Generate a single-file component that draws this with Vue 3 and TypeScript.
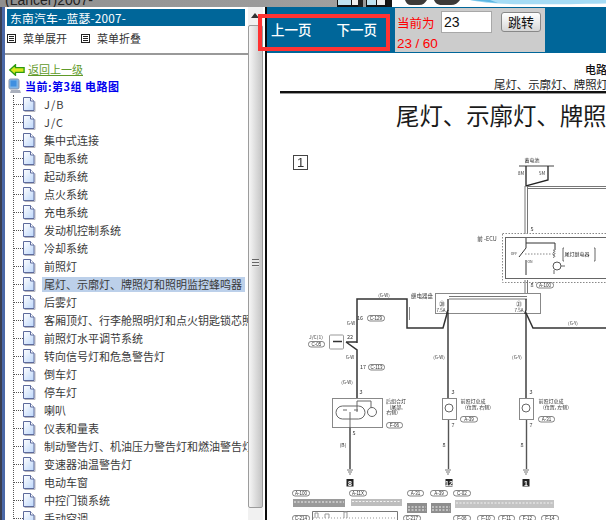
<script setup lang="ts">
const items: string[] = [
  'J/B', 'J/C', '集中式连接', '配电系统', '起动系统', '点火系统', '充电系统', '发动机控制系统', '冷却系统', '前照灯',
  '尾灯、示廓灯、牌照灯和照明监控蜂鸣器', '后雾灯', '客厢顶灯、行李舱照明灯和点火钥匙锁芯照明灯', '前照灯水平调节系统',
  '转向信号灯和危急警告灯', '倒车灯', '停车灯', '喇叭', '仪表和量表', '制动警告灯、机油压力警告灯和燃油警告灯',
  '变速器油温警告灯', '电动车窗', '中控门锁系统', '手动空调'
]
const selected = '尾灯、示廓灯、牌照灯和照明监控蜂鸣器'
const isLatin = (s: string): boolean => /^[A-Z/]+$/.test(s)

interface Pill { x: number; y: number; w: number; t: string }
const pills: Pill[] = [
  { x: 536, y: 285, w: 17, t: 'A-100' }, { x: 367, y: 318, w: 17, t: 'C-129' }, { x: 308, y: 344, w: 16, t: 'C-05' },
  { x: 368, y: 367, w: 16, t: 'C-113' }, { x: 386, y: 425, w: 16, t: 'F-06' }, { x: 460, y: 419, w: 17, t: 'A-39' },
  { x: 538, y: 419, w: 16, t: 'A-31' }, { x: 292, y: 493, w: 17, t: 'A-100' }, { x: 349, y: 493, w: 17, t: 'A-11X' },
  { x: 407, y: 493, w: 16, t: 'A-31' }, { x: 430, y: 493, w: 17, t: 'A-39' }, { x: 453, y: 493, w: 17, t: 'C-02' },
  { x: 292, y: 518, w: 17, t: 'C-214' }, { x: 403, y: 518, w: 17, t: 'C-217' }, { x: 453, y: 518, w: 17, t: 'F-06' },
  { x: 477, y: 518, w: 17, t: 'F-10' }, { x: 498, y: 518, w: 16, t: 'F-11' }, { x: 519, y: 518, w: 16, t: 'F-12' },
  { x: 541, y: 518, w: 17, t: 'F-14' }
]

interface Label { x: number; y: number; t: string; s?: number }
const labels: Label[] = [
  { x: 532, y: 162, t: '蓄电池', s: 5 }, { x: 521, y: 174.5, t: '8M' }, { x: 542, y: 174.5, t: '5M' }, { x: 532, y: 231, t: '5', s: 5.5 },
  { x: 487, y: 241, t: '前 -ECU', s: 5.5 }, { x: 514, y: 255, t: 'OFF', s: 3.5 }, { x: 530, y: 263, t: 'ON', s: 3.5 },
  { x: 532, y: 287, t: '8', s: 5.5 }, { x: 422, y: 298, t: '继电器盘', s: 5.5 }, { x: 384, y: 297, t: '(G-W)' },
  { x: 442, y: 306, t: '⑳', s: 6 }, { x: 441, y: 312, t: '7.5A' }, { x: 519, y: 306, t: '㉑', s: 6 }, { x: 519, y: 312, t: '7.5A' },
  { x: 360, y: 320, t: '16', s: 5.5 }, { x: 351, y: 325, t: 'G-W' }, { x: 573, y: 325, t: '(G-Y)' }, { x: 350, y: 339, t: '22', s: 5.5 },
  { x: 316, y: 339, t: 'J/C(1)', s: 5 }, { x: 350, y: 359, t: 'G-W' }, { x: 363, y: 369, t: '17', s: 5.5 }, { x: 347, y: 384, t: '(G-W)' },
  { x: 439, y: 359, t: '(G-W)' }, { x: 517, y: 359, t: '(G-Y)' }, { x: 361, y: 394, t: '3', s: 5.5 }, { x: 453, y: 394, t: '3', s: 5.5 }, { x: 531, y: 394, t: '3', s: 5.5 },
  { x: 396, y: 403, t: '后组合灯', s: 5 }, { x: 396, y: 408.5, t: '(尾部,', s: 5 }, { x: 392, y: 414, t: '右侧)', s: 5 },
  { x: 473, y: 403, t: '前照灯总成', s: 5 }, { x: 478, y: 408.5, t: '(位置, 右侧)', s: 5 },
  { x: 551, y: 403, t: '前照灯总成', s: 5 }, { x: 556, y: 408.5, t: '(位置, 左侧)', s: 5 },
  { x: 354, y: 435, t: '5', s: 5.5 }, { x: 453, y: 427, t: '7', s: 5.5 }, { x: 531, y: 427, t: '7', s: 5.5 }, { x: 343, y: 447, t: '(B)', s: 5 }, { x: 444, y: 447, t: '8', s: 5.5 }, { x: 522, y: 447, t: '8', s: 5.5 },
  { x: 577, y: 256, t: '尾灯继电器', s: 5 }
]

const grounds: Array<[number, number]> = [[350, 469], [448, 469], [526, 469]]
const badges: Array<[number, string]> = [[350, '8'], [449, '12'], [526, '1']]
const rects: Array<[number, number, number, number, string]> = [
  [293, 499, 52, 8, '#9a9a9a'], [351, 499, 51, 7, '#bdbdbd'], [407, 503, 20, 10, '#8e8e8e'],
  [431, 503, 20, 10, '#8e8e8e'], [455, 500, 99, 8, '#c4c4c4']
]
</script>

<template>
  <div class="page">
    <div class="strip">
      <div class="strip-title">(Lancer)2007-</div>
      <svg class="strip-art" viewBox="337 0 269 7" width="269" height="7" aria-hidden="true">
        <rect x="337" y="0" width="269" height="7" fill="#fff" />
        <rect x="337" y="0" width="26" height="7" fill="#111" />
        <rect x="338" y="0" width="13" height="5" fill="#bfe3f2" /><rect x="352" y="0" width="6" height="5" fill="#eee" />
        <rect x="358" y="0" width="8" height="7" fill="#222" /><rect x="363" y="0" width="3" height="7" fill="#999" />
        <rect x="366" y="0" width="21" height="7" fill="#111" />
        <rect x="367" y="0" width="9" height="5" fill="#bfe3f2" /><rect x="377" y="0" width="8" height="5" fill="#eee" />
        <rect x="387" y="0" width="5" height="7" fill="#151515" />
        <path d="M405 0h22c-2 3-4 5-8 5h-8c-3 0-5-2-6-5zM434 0h26c-2 3-5 5-9 5h-9c-4 0-7-2-8-5z" fill="#3d3a38" />
        <path d="M470 0c20 5 60 5 136 3.5V0z" fill="#a6dcf5" />
        <path d="M470 0c10 1 18 2 28 3l-8-3z" fill="#5cb7e3" />
      </svg>
    </div>

    <div class="main">
      <div class="edge"></div>

      <aside class="side">
        <div class="side-title">东南汽车--蓝瑟-2007-</div>
        <div class="side-menu">
          <span class="menu-item">
            <svg width="9" height="9" viewBox="0 0 9 9" aria-hidden="true"><rect x=".5" y=".5" width="8" height="8" fill="#fff" stroke="#222" /><path d="M2 2.500h5M2 4.500h5M2 6.500h5" stroke="#222" /></svg>
            菜单展开
          </span>
          <span class="menu-item">
            <svg width="9" height="9" viewBox="0 0 9 9" aria-hidden="true"><rect x=".5" y=".5" width="8" height="8" fill="#fff" stroke="#222" /><path d="M2 2.500h5M2 4.500h5M2 6.500h5" stroke="#222" /></svg>
            菜单折叠
          </span>
        </div>
        <div class="side-rule"></div>
        <div class="back">
          <svg width="16" height="12" viewBox="0 0 16 12" aria-hidden="true">
            <path d="M.7 6 6.500.7v3h8.600v4.600H6.500v3z" fill="#d8e820" stroke="#2c9a10" stroke-width="1.300" />
          </svg>
          <a class="back-link">返回上一级</a>
        </div>
        <div class="current">
          <svg width="14" height="16" viewBox="0 0 14 16" aria-hidden="true">
            <rect x="1" y="1" width="10" height="10" rx="1.500" fill="#7fb4e6" stroke="#8a93a8" />
            <rect x="2.500" y="2.500" width="6" height="6" fill="#3f8fe0" />
            <path d="M3 12h9l1 3H2z" fill="#a9afbc" />
          </svg>
          <span>当前:第3组 电路图</span>
        </div>
        <ul class="tree">
          <li v-for="item in items" :key="item" class="tree-row">
            <i class="tick"></i>
            <svg class="doc" width="13" height="15" viewBox="0 0 13 15" aria-hidden="true">
              <defs>
                <linearGradient id="docFill" x1="0" y1="0" x2="1" y2="1">
                  <stop offset="0" stop-color="#ffffff" />
                  <stop offset="1" stop-color="#bcd6fa" />
                </linearGradient>
              </defs>
              <path d="M1.500 14.500h10.500v-10" fill="none" stroke="#b5b5bd" stroke-width="1" />
              <path d="M.5.500h7l3.500 3.500v9.500H.5z" fill="url(#docFill)" stroke="#5c6a9c" />
              <path d="M7.500.5v3.500h3.500" fill="#fff" stroke="#5c6a9c" />
            </svg>
            <span class="tree-text" :class="{ on: item === selected, latin: isLatin(item) }">{{ item }}</span>
          </li>
        </ul>
      </aside>

      <div class="scrollbar">
        <svg class="arrow" width="8" height="5" viewBox="0 0 8 5" aria-hidden="true"><path d="M4 0 8 5H0z" fill="#333" /></svg>
        <div class="thumb"><span class="grip"></span></div>
      </div>

      <section class="view">
        <div class="toolbar">
          <div class="nav"><a>上一页</a><a>下一页</a></div>
          <div class="jump">
            <div class="jump-top">
              <span class="now">当前为</span>
              <input class="page-input" value="23" />
              <button class="go" type="button">跳转</button>
            </div>
            <div class="count">23 / 60</div>
          </div>
        </div>

        <div class="sheet">
          <div class="sheet-chapter">电路图</div>
          <div class="sheet-sub">尾灯、示廓灯、牌照灯和照明监控蜂鸣器</div>
          <div class="sheet-rule"></div>
          <h1 class="sheet-title">尾灯、示廓灯、牌照灯和照明监控蜂鸣器</h1>

          <svg class="diagram" viewBox="267 140 339 380" width="339" height="380">
            <rect x="293.500" y="155.500" width="14" height="14" fill="none" stroke="#444" />
            <text x="300.500" y="167" class="num">1</text>

            <g fill="none" stroke="#444">
              <path d="M519 166h35" />
              <path d="M526 166v20l22-6v-14" stroke-width="1.300" stroke="#222" />
              <path d="M525 186v48M527.500 186v48M527 186.500h79M527 188.500h79" stroke="#777" />
              <rect x="502.500" y="233.500" width="120" height="49" stroke="#888" stroke-dasharray="1.500 1.500" />
              <rect x="505.500" y="237.500" width="120" height="41" stroke="#666" />
              <path d="M526 238v5h29v7M526 243v5l-7 9M526 260v15" stroke="#333" />
              <path d="M525 254h28" stroke-dasharray="1.500 1.500" stroke="#888" />
              <path d="M553 250q4 1 0 2.500q4 1 0 2.500q4 1 0 2.500" stroke="#666" />
              <circle cx="557" cy="266" r="4" stroke="#555" />
              <path d="M561 266h4M554 270v4M564 248h-1v13h1M594 248h1v13h-1" stroke="#666" />
              <path d="M525 280v14M527.500 280v14M449 296.500h78M449 299h78" stroke="#777" />
              <rect x="435.500" y="293.500" width="105" height="20" stroke="#888" />
              <path d="M357 343v-44h50v29h36l5-18" stroke="#333" stroke-width="1.500" />
              <path d="M409.500 307v13" stroke="#888" />
              <path d="M448 299v11l-1 3 1 0v85M526 299v11l-1 3 1 0v85" stroke="#333" stroke-width="1.400" />
              <path d="M526 313l7 15h73" stroke="#333" stroke-width="1.500" />
              <rect x="329.500" y="335" width="14" height="14" rx="1" stroke="#999" />
              <path d="M333 341.500h9M346 342h11M346 342l11 8v48" stroke="#333" stroke-width="1.500" />
              <rect x="332.500" y="398.500" width="50" height="29" stroke="#888" />
              <rect x="336" y="406" width="29" height="13" rx="6.500" stroke="#666" />
              <circle cx="372" cy="412" r="4.500" stroke="#666" />
              <path d="M357 401h14v7M357 401v11M350 412v15M343 410h4M354 410h4" stroke="#666" />
              <path d="M350 427v42" stroke="#666" stroke-width="1.800" />
              <rect x="442.500" y="398.500" width="14" height="21" stroke="#888" />
              <circle cx="449" cy="408" r="4" stroke="#666" />
              <path d="M448.500 420v49" stroke="#555" stroke-width="1.400" />
              <rect x="519.500" y="398.500" width="14" height="21" stroke="#888" />
              <circle cx="526" cy="408" r="4" stroke="#666" />
              <path d="M526.500 420v49" stroke="#555" stroke-width="1.400" />
              <path d="M312.500 520v-8.500h85v8.500" stroke="#777" />
              <path d="M313 518h84" stroke="#999" stroke-dasharray="1 2" />
              <path d="M315 518v-5h3v5M325 518v-4h4v4M344 518v-6h3v6" stroke="#999" />
            </g>

            <g v-for="g in grounds" :key="g[0]" fill="none" stroke="#777">
              <path :d="`M${g[0] - 3} ${g[1] + 1}h6M${g[0] - 2} ${g[1] + 3}h4M${g[0] - 1} ${g[1] + 5}h2`" />
            </g>

            <g v-for="(r, i) in rects" :key="i">
              <rect :x="r[0]" :y="r[1]" :width="r[2]" :height="r[3]" :fill="r[4]" />
              <path :d="`M${r[0] + 1} ${r[1] + r[3] / 2 - 1}h${r[2] - 2}`" fill="none" stroke="#f2f2f2" stroke-dasharray="2 1.500" />
              <path v-if="r[3] > 8" :d="`M${r[0] + 1} ${r[1] + r[3] / 2 + 2}h${r[2] - 2}`" fill="none" stroke="#f2f2f2" stroke-dasharray="2 1.500" />
            </g>

            <g v-for="b in badges" :key="b[1]">
              <rect :x="b[0] - 3.500" y="479" width="7" height="7.500" fill="#222" />
              <text :x="b[0]" y="485.500" class="badge">{{ b[1] }}</text>
            </g>

            <g v-for="p in pills" :key="`${p.x}-${p.y}`">
              <rect :x="p.x + 0.5" :y="p.y - 2.5" :width="p.w" height="5.500" rx="2.500" fill="#fff" stroke="#666" stroke-width=".8" />
              <text :x="p.x + p.w / 2 + 0.5" :y="p.y + 2" class="pill">{{ p.t }}</text>
            </g>

            <text v-for="(l, i) in labels" :key="i" :x="l.x" :y="l.y" class="lab" :font-size="l.s ?? 4.5">{{ l.t }}</text>
          </svg>
        </div>
      </section>
    </div>

    <div class="annotation"></div>
  </div>
</template>

<style>
html, body { margin: 0; padding: 0; overflow: hidden; }
</style>

<style scoped>
.page {
  position: relative;
  width: 606px;
  height: 520px;
  overflow: hidden;
  background: #fff;
  font-family: "Noto Sans CJK SC", "Liberation Sans", sans-serif;
}
.strip { display: flex; height: 7px; overflow: hidden; background: linear-gradient(90deg, #8f8f8f, #a3a3a3 70%, #b5b5b5); }
.strip-title {
  width: 337px;
  padding-left: 5px;
  box-sizing: border-box;
  margin-top: -8px;
  font: 14px/16px "Liberation Sans", sans-serif;
  color: #222;
}
.strip-art { display: block; flex: none; }
.main { display: flex; height: 513px; }
.edge { width: 5px; flex: none; background: linear-gradient(90deg, #3a3f52 0 2px, #4a68a8 2px 5px); }

.side { width: 243px; flex: none; overflow: hidden; background: #fff; font-size: 11px; color: #333; }
.side-title {
  margin: 2px 3px 0 2px;
  height: 17px;
  line-height: 17px;
  padding-left: 3px;
  background: #006699;
  color: #fff;
  font-size: 11.800px;
  letter-spacing: 0.2px;
  white-space: nowrap;
}
.side-menu { display: flex; gap: 14px; height: 26px; align-items: center; padding: 0 0 2px 2px; box-sizing: border-box; }
.menu-item { display: flex; align-items: center; gap: 7px; line-height: 1; color: #333; }
.menu-item svg { display: block; }
.side-rule { height: 2px; background: #999; margin-top: 1px; }
.back { display: flex; align-items: center; gap: 3px; height: 15px; margin-top: 7px; padding-left: 4px; }
.back-link { color: #5f9a2a; text-decoration: underline; line-height: 15px; }
.current {
  display: flex;
  align-items: center;
  gap: 3px;
  height: 18px;
  padding-left: 3px;
  color: #0000ee;
  font-weight: 700;
  letter-spacing: 0.5px;
  white-space: nowrap;
}
.tree { list-style: none; margin: 0 0 0 8px; padding: 0; border-left: 1px dotted #555; }
.tree-row { display: flex; align-items: center; height: 18px; white-space: nowrap; }
.tick { display: block; width: 9px; flex: none; border-top: 1px dotted #555; }
.doc { display: block; flex: none; margin-right: 6px; }
.tree-text { display: block; padding: 0 2px; line-height: 15px; color: #3a3a3a; }
.tree-text.latin { letter-spacing: 1px; }
.tree-text.on { background: #bcd0ea; padding-right: 3px; }

.scrollbar {
  position: relative;
  width: 17px;
  flex: none;
  background: #f1f1f1;
  border-right: 2px solid #0c0c0c;
  box-shadow: inset -2px 0 0 #fff;
  display: flex;
  flex-direction: column;
  align-items: flex-start;
}
.arrow { display: block; margin: 6px 0 0 3px; }
.thumb {
  margin: 7px 0 0 0;
  width: 13px;
  height: 481px;
  border: 1px solid #9c9c9c;
  border-radius: 2px;
  background: linear-gradient(90deg, #f6f6f6, #e2e2e2 40%, #c9c9c9 90%);
  display: flex;
  align-items: flex-start;
  justify-content: center;
}
.grip {
  display: block;
  margin-top: 233px;
  width: 7px;
  height: 8px;
  background: repeating-linear-gradient(180deg, #666 0 1px, #e8e8e8 1px 3px);
}

.view { flex: 1; min-width: 0; overflow: hidden; background: #fff; }
.toolbar { display: flex; height: 46px; box-sizing: border-box; padding: 1px 0; background: #006699; }
.nav {
  width: 128px;
  flex: none;
  display: flex;
  gap: 25px;
  align-items: center;
  padding: 0 0 2px 4px;
  box-sizing: border-box;
  color: #fff;
  font-size: 13.500px;
  font-weight: 500;
}
.jump {
  width: 150px;
  flex: none;
  background: #cccccc;
  padding: 3px 0 0 2px;
  box-sizing: border-box;
}
.jump-top { display: flex; align-items: center; height: 22px; }
.now { color: #f00; font-size: 12.500px; width: 44px; flex: none; }
.page-input {
  width: 51px;
  height: 22px;
  box-sizing: border-box;
  border: 1px solid #a8a8a8;
  background: #fff;
  padding: 0 2px;
  font: 14px "Liberation Sans", sans-serif;
  color: #111;
  outline: none;
  flex: none;
}
.go {
  margin-left: 9px;
  width: 40px;
  height: 20px;
  padding: 0;
  border: 1px solid #888;
  border-radius: 3px;
  background: linear-gradient(180deg, #fff, #e8e8e8 60%, #d6d6d6);
  color: #111;
  font-family: "Noto Sans CJK SC", sans-serif;
  font-size: 13px;
  line-height: 18px;
}
.count { margin-top: 4px; color: #f00; font: 13.500px/14px "Liberation Sans", sans-serif; letter-spacing: -0.1px; }

.sheet { position: relative; height: 467px; overflow: hidden; white-space: nowrap; color: #111; }
.sheet-chapter { padding-left: 318px; margin-top: 9px; font-size: 11px; line-height: 15px; font-weight: 500; }
.sheet-sub { padding-left: 227px; margin-top: 1px; font-size: 11.400px; line-height: 13px; color: #222; }
.sheet-rule { margin: 0 0 0 13px; height: 2px; background: #111; border-bottom: 1px solid #999; }
.sheet-title { margin: 6px 0 0 129px; font-size: 23.400px; line-height: 30px; font-weight: 400; color: #1a1a1a; }
.diagram { position: absolute; left: 0; top: 87px; filter: blur(0.35px); }
.num { font: 13px "Liberation Sans", sans-serif; fill: #333; text-anchor: middle; }
.lab { font-family: "Noto Sans CJK SC", sans-serif; fill: #333; text-anchor: middle; }
.pill { font: 4.500px "Liberation Sans", sans-serif; fill: #333; text-anchor: middle; }
.badge { font: 700 7px "Liberation Sans", sans-serif; fill: #fff; text-anchor: middle; }

.annotation {
  position: absolute;
  left: 258px;
  top: 14px;
  width: 132px;
  height: 37px;
  box-sizing: border-box;
  border: 4px solid #ff3333;
  pointer-events: none;
}
</style>
